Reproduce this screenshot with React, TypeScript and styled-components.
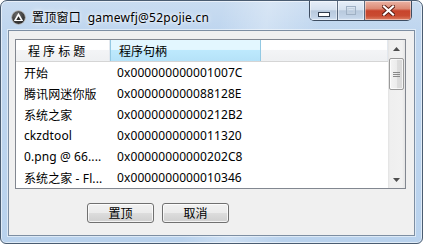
import React from 'react';
import styled, { createGlobalStyle } from 'styled-components';

const GlobalStyle = createGlobalStyle`
    html, body {
        margin: 0;
        padding: 0;
        background: #ffffff;
    }
    body {
        font-family: "Noto Sans", "Noto Sans CJK SC", sans-serif;
        font-size: 12px;
        color: #000;
    }
`

const Window = styled.div`
    width: 423px;
    height: 244px;
    box-sizing: border-box;
    display: flex;
    flex-direction: column;
    border: 1px solid #4a5c71;
    border-radius: 7px 7px 6px 6px;
    overflow: hidden;
    background:
        linear-gradient(100deg, rgba(255,255,255,0) 0%, rgba(255,255,255,0) 48%, rgba(255,255,255,0.28) 58%, rgba(255,255,255,0) 70%),
        linear-gradient(180deg, #c9dcf1 0%, #bfd6ef 12%, #b9d2ed 100%);
    box-shadow: inset 0 0 0 1px rgba(255,255,255,0.55);
`

const TitleBar = styled.div`
    height: 29px;
    flex: none;
    display: flex;
    align-items: center;
    padding: 0 10px;
`

const AppIcon = styled.svg`
    width: 15px;
    height: 15px;
    flex: none;
    margin-top: 3px;
`

const Title = styled.span`
    margin-left: 6px;
    margin-top: 3px;
    font-size: 12px;
    letter-spacing: 0.25px;
    white-space: pre;
    color: #000;
    text-shadow: 0 0 6px rgba(255,255,255,0.9), 0 0 3px rgba(255,255,255,0.9);
`

const CaptionGroup = styled.div`
    margin-left: auto;
    align-self: flex-start;
    width: 103px;
    height: 20px;
    box-sizing: border-box;
    display: flex;
    border: 1px solid rgba(38,52,72,0.85);
    border-top: none;
    border-radius: 0 0 5px 5px;
    overflow: hidden;
`

const CaptionButton = styled.div<{ $width: number; $close?: boolean; $sep?: boolean }>`
    width: ${(p) => p.$width}px;
    height: 100%;
    flex: none;
    display: flex;
    align-items: center;
    justify-content: center;
    border-right: ${(p) => (p.$sep ? '1px solid rgba(50,66,88,0.75)' : 'none')};
    background: ${(p) => p.$close
        ? 'linear-gradient(180deg, #eab3a5 0%, #dc8a75 40%, #c8442c 52%, #c94b31 78%, #dc7f64 100%)'
        : 'linear-gradient(180deg, #e6eef8 0%, #d6e2f0 45%, #b8c9dd 52%, #c2d3e7 85%, #d2e1f2 100%)'};
    box-shadow: inset 0 0 0 1px rgba(255,255,255,0.45);
`

const Client = styled.div`
    flex: 1;
    margin: 0 7px 7px;
    display: flex;
    flex-direction: column;
    background: #f0f0f0;
    border: 1px solid #7d8ea2;
    box-shadow: 0 0 0 1px rgba(255,255,255,0.5);
`

const ListView = styled.div`
    height: 150px;
    box-sizing: border-box;
    margin: 8px 8px 0 6px;
    display: flex;
    border: 1px solid #828790;
    background: #fff;
`

const ListContent = styled.div`
    flex: 1;
    display: flex;
    flex-direction: column;
    overflow: hidden;
`

const Header = styled.div`
    height: 22px;
    flex: none;
    box-sizing: border-box;
    display: grid;
    grid-template-columns: 94px 151px 1fr;
    border-bottom: 1px solid #d5d5d5;
    background: linear-gradient(180deg, #ffffff 0%, #ffffff 45%, #f3f4f6 50%, #eef0f2 100%);
`

const HeaderCell = styled.div<{ $active?: boolean; $pad: number }>`
    display: flex;
    align-items: center;
    padding-left: ${(p) => p.$pad}px;
    white-space: pre;
    border-right: 1px solid ${(p) => (p.$active ? '#93c9e3' : '#e3e8ee')};
    background: ${(p) => p.$active
        ? 'linear-gradient(180deg, #e3f7ff 0%, #e3f7ff 45%, #bde9fd 50%, #b5e2f8 100%)'
        : 'transparent'};
    box-shadow: ${(p) => (p.$active ? 'inset 1px 0 0 #93c9e3' : 'none')};
`

const Row = styled.div`
    height: 21px;
    flex: none;
    display: grid;
    grid-template-columns: 94px 151px 1fr;
    align-items: center;
`

const Cell = styled.div<{ $pad: number }>`
    padding-left: ${(p) => p.$pad}px;
    white-space: nowrap;
    overflow: hidden;
    letter-spacing: 0.1px;
`

const ScrollBar = styled.div`
    width: 17px;
    flex: none;
    display: flex;
    flex-direction: column;
    background: linear-gradient(90deg, #e2e2e2 0px, #efefef 2px, #f1f1f1 14px, #e5e5e5 17px);
`

const ScrollArrow = styled.div`
    height: 17px;
    flex: none;
    display: flex;
    align-items: center;
    justify-content: center;
`

const Thumb = styled.div`
    height: 32px;
    margin: 1px 1px 0;
    box-sizing: border-box;
    border: 1px solid #9a9a9a;
    border-radius: 2px;
    display: flex;
    align-items: center;
    justify-content: center;
    background: linear-gradient(90deg, #f4f4f4 0%, #ececec 50%, #dedede 51%, #d8d8d8 100%);
    box-shadow: inset 0 0 0 1px rgba(255,255,255,0.7);
`

const Track = styled.div`
    flex: 1;
`

const ButtonRow = styled.div`
    display: flex;
    gap: 8px;
    padding-left: 78px;
    margin-top: 14px;
`

const Button = styled.button`
    width: 67px;
    height: 20px;
    padding: 0;
    box-sizing: border-box;
    border: 1px solid #707070;
    border-radius: 3px;
    font-family: inherit;
    font-size: 12px;
    color: #000;
    background: linear-gradient(180deg, #f2f2f2 0%, #ebebeb 50%, #dddddd 51%, #cfcfcf 100%);
    box-shadow: inset 0 0 0 1px rgba(255,255,255,0.75);
`

const rows: [string, string][] = [
    ['开始', '0x000000000001007C'],
    ['腾讯网迷你版', '0x000000000088128E'],
    ['系统之家', '0x00000000000212B2'],
    ['ckzdtool', '0x0000000000011320'],
    ['0.png @ 66....', '0x00000000000202C8'],
    ['系统之家 - Fl...', '0x0000000000010346'],
]

const App: React.FC = () => {
    return (
        <>
            <GlobalStyle />
            <Window>
                <TitleBar>
                    <AppIcon viewBox="0 0 16 16">
                        <defs>
                            <radialGradient id="ic" cx="0.4" cy="0.3" r="0.8">
                                <stop offset="0" stopColor="#6e6e6e" />
                                <stop offset="1" stopColor="#1c1c1c" />
                            </radialGradient>
                        </defs>
                        <circle cx="8" cy="8" r="7.3" fill="url(#ic)" stroke="#b8b8b8" strokeWidth="0.9" />
                        <polygon points="8,2.8 13,11.8 3,11.8" fill="#fff" />
                        <polygon points="8,6.6 10.4,10.6 5.6,10.6" fill="#2a2a2a" />
                    </AppIcon>
                    <Title>置顶窗口  gamewfj@52pojie.cn</Title>
                    <CaptionGroup>
                        <CaptionButton $width={27} $sep>
                            <svg width="12" height="6" viewBox="0 0 12 6" style={{ marginTop: 8 }}>
                                <rect x="0.5" y="0.5" width="11" height="4" fill="#fff" stroke="#2f3b4c" />
                            </svg>
                        </CaptionButton>
                        <CaptionButton $width={26} $sep>
                            <svg width="10" height="9" viewBox="0 0 10 9">
                                <rect x="0.5" y="0.5" width="9" height="8" fill="none" stroke="#9fb0c4" />
                                <rect x="2" y="2.5" width="6" height="4.5" fill="none" stroke="#c4d1df" />
                            </svg>
                        </CaptionButton>
                        <CaptionButton $width={46} $close>
                            <svg width="13" height="11" viewBox="0 0 13 11">
                                <path d="M2 1.5 L11 9.5 M11 1.5 L2 9.5" stroke="#5a1c12" strokeWidth="4" strokeLinecap="square" />
                                <path d="M2 1.5 L11 9.5 M11 1.5 L2 9.5" stroke="#ffffff" strokeWidth="2.2" strokeLinecap="square" />
                            </svg>
                        </CaptionButton>
                    </CaptionGroup>
                </TitleBar>
                <Client>
                    <ListView>
                        <ListContent>
                            <Header>
                                <HeaderCell $pad={12}>程 序 标 题</HeaderCell>
                                <HeaderCell $pad={9} $active>程序句柄</HeaderCell>
                                <HeaderCell $pad={0} />
                            </Header>
                            {rows.map(([name, handle]) => (
                                <Row key={handle}>
                                    <Cell $pad={8}>{name}</Cell>
                                    <Cell $pad={7}>{handle}</Cell>
                                    <Cell $pad={0} />
                                </Row>
                            ))}
                        </ListContent>
                        <ScrollBar>
                            <ScrollArrow>
                                <svg width="7" height="4" viewBox="0 0 7 4">
                                    <polygon points="3.5,0 7,4 0,4" fill="#4d4d4d" />
                                </svg>
                            </ScrollArrow>
                            <Thumb>
                                <svg width="7" height="7" viewBox="0 0 7 7">
                                    <path d="M0 1.5 H7 M0 3.5 H7 M0 5.5 H7" stroke="#8a8a8a" strokeWidth="1" />
                                </svg>
                            </Thumb>
                            <Track />
                            <ScrollArrow>
                                <svg width="7" height="4" viewBox="0 0 7 4">
                                    <polygon points="0,0 7,0 3.5,4" fill="#4d4d4d" />
                                </svg>
                            </ScrollArrow>
                        </ScrollBar>
                    </ListView>
                    <ButtonRow>
                        <Button>置顶</Button>
                        <Button>取消</Button>
                    </ButtonRow>
                </Client>
            </Window>
        </>
    )
}

export default App;
